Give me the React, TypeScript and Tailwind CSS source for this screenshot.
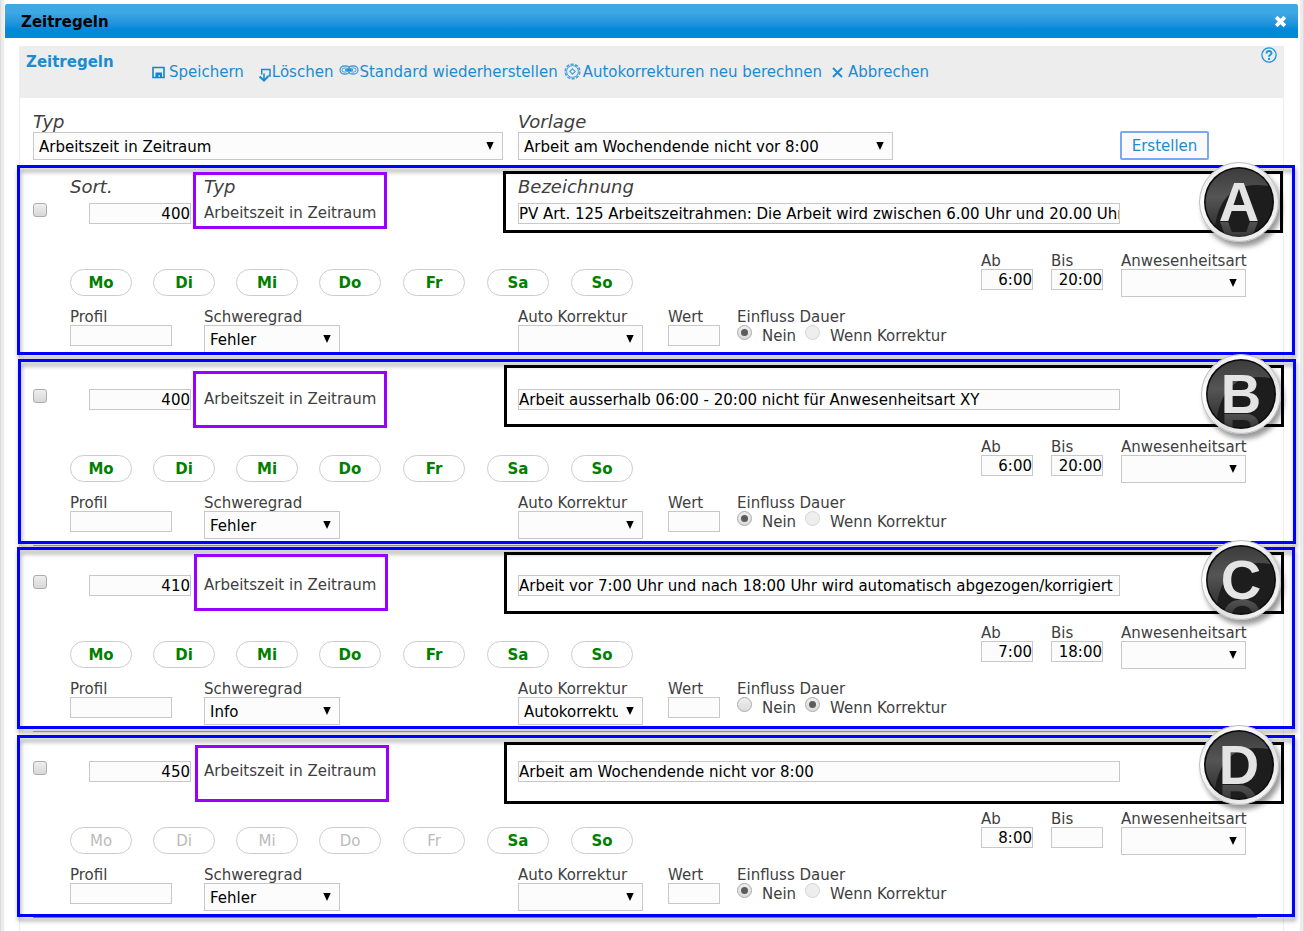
import React, { useState } from 'react'
import clsx from 'clsx'

interface Rule {
  id: string;
  sort: string;
  name: string;
  days: string[];
  from: string;
  to: string;
  severity: string;
  correction: string;
  influence: "nein" | "korrektur";
  // placement of the marker frames over the rule
  frame: string;
  typeFrame: string;
  nameFrame: string;
  badge: string;
}

const WORKDAYS = ["Mo", "Di", "Mi", "Do"];
const WEEKEND = ["Fr", "Sa", "So"];
const ALL_DAYS = [...WORKDAYS, ...WEEKEND];

const RULES: Rule[] = [
  {
    id: "A",
    sort: "400",
    name: "PV Art. 125 Arbeitszeitrahmen: Die Arbeit wird zwischen 6.00 Uhr und 20.00 Uhr geleistet",
    days: ALL_DAYS,
    from: "6:00",
    to: "20:00",
    severity: "Fehler",
    correction: "",
    influence: "nein",
    frame: "-left-[3px] -right-3 -top-[2px] h-[190px]",
    typeFrame: "left-[173px] top-[5px]",
    nameFrame: "left-[483px] right-0 top-[4px]",
    badge: "right-1 -top-[5px]",
  },
  {
    id: "B",
    sort: "400",
    name: "Arbeit ausserhalb 06:00 - 20:00 nicht für Anwesenheitsart XY",
    days: ALL_DAYS,
    from: "6:00",
    to: "20:00",
    severity: "Fehler",
    correction: "",
    influence: "nein",
    frame: "-left-[2px] -right-[13px] top-0 h-[185px]",
    typeFrame: "left-[173px] top-[12px]",
    nameFrame: "left-[484px] -right-px top-[6px]",
    badge: "right-[2px] -top-[5px]",
  },
  {
    id: "C",
    sort: "410",
    name: "Arbeit vor 7:00 Uhr und nach 18:00 Uhr wird automatisch abgezogen/korrigiert",
    days: ALL_DAYS,
    from: "7:00",
    to: "18:00",
    severity: "Info",
    correction: "Autokorrektur",
    influence: "korrektur",
    frame: "-left-[3px] -right-3 top-[2px] h-[182px]",
    typeFrame: "left-[174px] top-[9px]",
    nameFrame: "left-[484px] -right-px top-[7px]",
    badge: "right-[2px] -top-[5px]",
  },
  {
    id: "D",
    sort: "450",
    name: "Arbeit am Wochendende nicht vor 8:00",
    days: ["Sa", "So"],
    from: "8:00",
    to: "",
    severity: "Fehler",
    correction: "",
    influence: "nein",
    frame: "-left-[3px] -right-3 top-[4px] h-[182px]",
    typeFrame: "left-[175px] top-[14px]",
    nameFrame: "left-[484px] -right-px top-[11px]",
    badge: "right-1 -top-[6px]",
  },
];


interface SelectProps {
  id: string;
  value: string;
  options: string[];
  className: string;
}

const Select: React.FC<SelectProps> = ({ id, value, options, className }) => (
  <div className={clsx("relative h-7", className)}>
    <select
      id={id}
      defaultValue={value}
      className="block h-full w-full appearance-none border border-[#c8c8c8] bg-[#fcfcfc] pl-[5px] pr-6 pt-[2px] text-black outline-none"
    >
      {options.map((option) => <option key={option} value={option}>{option}</option>)}
    </select>
    <svg className="pointer-events-none absolute right-[9px] top-[10px] h-2 w-2" viewBox="0 0 8 8">
      <path d="M0.3 0h7.4L4 8z" fill="#000" />
    </svg>
  </div>
);


interface TextInputProps {
  id: string;
  value: string;
  className: string;
}

const TextInput: React.FC<TextInputProps> = ({ id, value, className }) => (
  <input
    id={id}
    type="text"
    defaultValue={value}
    className={clsx("block h-[21px] border border-[#c8c8c8] bg-[#fcfcfc] pt-[2px] text-black outline-none", className)}
  />
);


const Field: React.FC<{ id: string; label: string; className?: string; children: React.ReactNode }> = ({ id, label, className, children }) => (
  <div className={className}>
    <label htmlFor={id} className="block h-[18px] whitespace-nowrap leading-5">{label}</label>
    {children}
  </div>
);


const DayButton: React.FC<{ day: string; active: boolean; onToggle: () => void }> = ({ day, active, onToggle }) => (
  <button
    type="button"
    aria-pressed={active}
    onClick={onToggle}
    className={clsx(
      "h-[27px] w-[62px] rounded-full border border-[#cccccc] bg-white pt-[2px]",
      active ? "font-bold text-[#007f00]" : "text-[#bbbbbb]"
    )}
  >
    {day}
  </button>
);


const Radio: React.FC<{ id: string; name: string; checked: boolean; disabled: boolean; onChange: () => void }> = ({ id, name, checked, disabled, onChange }) => (
  <span className="relative block h-[15px] w-[15px]">
    <input
      id={id}
      type="radio"
      name={name}
      checked={checked}
      disabled={disabled}
      onChange={onChange}
      className="block h-[15px] w-[15px] appearance-none rounded-full border border-[#aaaaaa] bg-linear-to-b from-[#eeeeee] to-[#dcdcdc] disabled:border-[#d4d4d4] disabled:to-[#eeeeee]"
    />
    {checked && <span className="pointer-events-none absolute left-1 top-1 h-[7px] w-[7px] rounded-full bg-[#5c5c5c]" />}
  </span>
);


// round glossy marker with the letter of the rule
const Badge: React.FC<{ letter: string; className: string }> = ({ letter, className }) => (
  <div className={clsx("pointer-events-none absolute h-20 w-20 rounded-full shadow-[3px_5px_5px_rgba(0,0,0,0.4)]", className)}>
    <svg className="absolute inset-0 h-20 w-20" viewBox="0 0 80 80">
      <defs>
        <linearGradient id={`ring${letter}`} x1="0" y1="0" x2="1" y2="1">
          <stop offset="0" stopColor="#c9c9c9" />
          <stop offset="0.25" stopColor="#ffffff" />
          <stop offset="0.6" stopColor="#e2e2e2" />
          <stop offset="1" stopColor="#ffffff" />
        </linearGradient>
        <linearGradient id={`gloss${letter}`} x1="0" y1="0" x2="0" y2="1">
          <stop offset="0" stopColor="#3c3c3c" />
          <stop offset="0.5" stopColor="#555555" />
          <stop offset="1" stopColor="#333333" />
        </linearGradient>
      </defs>
      <circle cx="40" cy="40" r="39.5" fill={`url(#ring${letter})`} stroke="#bdbdbd" strokeWidth="1" />
      <circle cx="40" cy="40" r="35" fill="#0c0c0c" />
      <circle cx="40" cy="40" r="33.5" fill="#1d1d1d" />
      <path d="M16 63.4A33.5 33.5 0 1 1 69.5 24Q49 21 36 28Q20 38 16 63.4z" fill={`url(#gloss${letter})`} />
    </svg>
    <div className="absolute inset-[5px] flex justify-center overflow-hidden rounded-full pt-[7px]">
      <span className="block h-14 text-[56px] font-bold leading-[56px] text-[#e4e4e4] [font-family:'Liberation_Sans',Arial,sans-serif] [-webkit-box-reflect:below_-17px_linear-gradient(transparent_30%,rgba(0,0,0,0.35))]">
        {letter}
      </span>
    </div>
  </div>
);


const RuleRow: React.FC<{ rule: Rule; first: boolean }> = ({ rule, first }) => {
  const [days, setDays] = useState<string[]>(rule.days);
  const [influence, setInfluence] = useState(rule.influence);

  const toggleDay = (day: string) => {
    setDays(days.includes(day) ? days.filter((d) => d !== day) : [...days, day]);
  };

  const key = rule.id.toLowerCase();
  // without a correction there is nothing the duration could depend on
  const noCorrection = rule.correction === "";

  return (
    <section className="relative pb-[6px]">
      <div className="ml-[13px] mr-[26px] border-t border-[#8f8f8f]" />

      {first ? (
        <div className="grid h-[35px] grid-cols-[134px_314px_1fr] pl-[50px] pt-[7px] text-lg italic leading-6">
          <span>Sort.</span>
          <span>Typ</span>
          <span>Bezeichnung</span>
        </div>
      ) : (
        <div className="h-[29px]" />
      )}

      <div className="grid grid-cols-[37px_134px_314px_1fr] pl-[13px] pr-[163px]">
        <input
          type="checkbox"
          aria-label="Regel auswählen"
          className="h-[14px] w-[14px] appearance-none rounded-[3px] border border-[#acacac] bg-linear-to-b from-[#eeeeee] to-[#d8d8d8] checked:bg-[#5c5c5c]"
        />
        <input
          type="text"
          aria-label="Sort."
          defaultValue={rule.sort}
          className="ml-[19px] block h-[21px] w-[102px] border border-[#c8c8c8] bg-[#fcfcfc] pt-[2px] text-right text-black outline-none"
        />
        <span className="whitespace-nowrap leading-5">Arbeitszeit in Zeitraum</span>
        <input
          type="text"
          aria-label="Bezeichnung"
          defaultValue={rule.name}
          className="block h-[21px] w-full min-w-0 border border-[#c8c8c8] bg-[#fcfcfc] pt-[2px] text-black outline-none"
        />
      </div>

      <div className="mt-[27px] flex h-[46px] justify-between pl-[50px] pr-[37px]">
        <div className="flex gap-[22px] pt-[18px]">
          <div className="flex gap-[21px]">
            {WORKDAYS.map((day) => <DayButton key={day} day={day} active={days.includes(day)} onToggle={() => toggleDay(day)} />)}
          </div>
          <div className="flex gap-[22px]">
            {WEEKEND.map((day) => <DayButton key={day} day={day} active={days.includes(day)} onToggle={() => toggleDay(day)} />)}
          </div>
        </div>
        <div className="flex gap-[18px]">
          <Field id={`${key}-ab`} label="Ab">
            <TextInput id={`${key}-ab`} value={rule.from} className="w-[52px] text-right" />
          </Field>
          <Field id={`${key}-bis`} label="Bis">
            <TextInput id={`${key}-bis`} value={rule.to} className="w-[52px] text-right" />
          </Field>
          <Field id={`${key}-art`} label="Anwesenheitsart" className="w-[125px]">
            <Select id={`${key}-art`} value="" options={[""]} className="w-[125px]" />
          </Field>
        </div>
      </div>

      <div className="mt-[10px] grid grid-cols-[134px_314px_150px_69px_1fr] pl-[50px]">
        <Field id={`${key}-profil`} label="Profil">
          <TextInput id={`${key}-profil`} value="" className="w-[102px]" />
        </Field>
        <Field id={`${key}-grad`} label="Schweregrad">
          <Select id={`${key}-grad`} value={rule.severity} options={["Fehler", "Info"]} className="w-[136px]" />
        </Field>
        <Field id={`${key}-auto`} label="Auto Korrektur">
          <Select id={`${key}-auto`} value={rule.correction} options={["", "Autokorrektur"]} className="w-[125px]" />
        </Field>
        <Field id={`${key}-wert`} label="Wert">
          <TextInput id={`${key}-wert`} value="" className="w-[52px]" />
        </Field>
        <fieldset>
          <legend className="h-[18px] leading-5">Einfluss Dauer</legend>
          <div className="flex">
            <Radio id={`${key}-nein`} name={`${key}-einfluss`} checked={influence === "nein"} disabled={false} onChange={() => setInfluence("nein")} />
            <label htmlFor={`${key}-nein`} className="w-[53px] pl-[10px] leading-[22px]">Nein</label>
            <Radio id={`${key}-korr`} name={`${key}-einfluss`} checked={influence === "korrektur"} disabled={noCorrection} onChange={() => setInfluence("korrektur")} />
            <label htmlFor={`${key}-korr`} className="whitespace-nowrap pl-[10px] leading-[22px]">Wenn Korrektur</label>
          </div>
        </fieldset>
      </div>

      {/* marker frames */}
      <div className={clsx("pointer-events-none absolute border-[3px] border-[#0000ff] drop-shadow-[1px_4px_2px_rgba(0,0,0,0.35)]", rule.frame)} />
      <div className={clsx("pointer-events-none absolute h-[57px] w-[194px] border-[3px] border-[#9900ff]", rule.typeFrame)} />
      <div className={clsx("pointer-events-none absolute h-[62px] border-[3px] border-black", rule.nameFrame)} />
      <Badge letter={rule.id} className={rule.badge} />
    </section>
  );
};


const Toolbar: React.FC = () => (
  <nav className="flex items-center whitespace-nowrap text-[#1a8cd2]">
    <button type="button" className="flex items-center gap-1">
      <svg className="h-[13px] w-[13px]" viewBox="0 0 13 13">
        <path d="M1 1.5h11v10H1z" fill="none" stroke="#0f86d0" strokeWidth="1.6" />
        <path d="M3.5 6.5h6.5v4.500h-2v-1.800h-1.500v1.800h-3z" fill="#0f86d0" />
      </svg>
      Speichern
    </button>
    <button type="button" className="ml-[14px] flex items-center">
      <svg className="mt-[6px] h-[14px] w-[14px]" viewBox="0 0 14 14" fill="none" stroke="#1a8cd2">
        <path d="M3.700 6.500V1.500h8.300v6.500H9.500" strokeWidth="1.5" />
        <path d="M6 5.500v7" strokeWidth="1.6" />
        <path d="M1.500 8.500L6 12.600l4-4.100" strokeWidth="2" />
      </svg>
      Löschen
    </button>
    <button type="button" className="ml-[6px] flex items-center">
      <svg className="mb-[5px] h-[10px] w-5" viewBox="0 0 20 10" fill="none" stroke="#1a8cd2">
        <rect x="1" y="1" width="10" height="8" rx="4" strokeWidth="1.3" opacity="0.8" />
        <rect x="9" y="1" width="10" height="8" rx="4" strokeWidth="1.3" opacity="0.8" />
        <rect x="3" y="3" width="6" height="4" rx="2" strokeWidth="1" opacity="0.8" />
        <rect x="11" y="3" width="6" height="4" rx="2" strokeWidth="1" opacity="0.8" />
        <path d="M6 5h8" strokeWidth="1.6" />
      </svg>
      Standard wiederherstellen
    </button>
    <button type="button" className="ml-[6px] flex items-center gap-[2px]">
      <svg className="mb-[2px] h-[17px] w-[17px]" viewBox="0 0 17 17" fill="none" stroke="#1a8cd2">
        <circle cx="8.5" cy="8.5" r="7.3" strokeWidth="1.6" strokeDasharray="3.2 1.39" opacity="0.8" />
        <circle cx="8.5" cy="8.5" r="5.9" strokeWidth="1" opacity="0.8" />
        <path d="M8.5 5.800l2.700 2.700-2.700 2.700-2.700-2.700z" strokeWidth="1.1" opacity="0.8" />
      </svg>
      Autokorrekturen neu berechnen
    </button>
    <button type="button" className="ml-[10px] flex items-center gap-[5px]">
      <svg className="h-[11px] w-[11px]" viewBox="0 0 11 11">
        <path d="M1 1l9 9M10 1l-9 9" stroke="#1a8cd2" strokeWidth="1.9" />
      </svg>
      Abbrechen
    </button>
  </nav>
);


export default function App() {
  return (
    <div className="min-h-screen border-x border-[#dcdcdc] bg-[#ececec] px-[3px] text-[15px] text-[#404040] [font-family:Verdana,'DejaVu_Sans',sans-serif]">
      <div className="min-h-screen bg-white pl-px pr-[2px] pt-1">
        <header className="flex h-[34px] items-center justify-between rounded-t-xs bg-linear-to-b from-[#3ea8e3] from-25% to-[#0088d9] to-75% pl-4 pr-[11px]">
          <h1 className="pt-[2px] font-bold text-black">Zeitregeln</h1>
          <button type="button" aria-label="Schliessen">
            <svg className="h-[13px] w-[13px]" viewBox="0 0 12 12">
              <path d="M2 2l8 8M10 2l-8 8" stroke="#fff" strokeWidth="3.4" />
            </svg>
          </button>
        </header>

        <main className="mx-[14px] mt-2 min-h-[885px] border-x border-[#eeeeee]">
          <div className="flex h-[52px] items-start bg-[#ededed] px-[6px]">
            <h2 className="w-[126px] pt-[5px] font-bold text-[#1a8cd2]">Zeitregeln</h2>
            <div className="pt-[15px]">
              <Toolbar />
            </div>
            <button type="button" aria-label="Hilfe" className="ml-auto mt-px">
              <svg className="h-4 w-4" viewBox="0 0 16 16" fill="none" stroke="#1a94dc">
                <circle cx="8" cy="8" r="7.1" strokeWidth="1.3" />
                <path d="M5.6 6.4C5.6 3.3 10.6 3.3 10.5 6.2C10.4 7.7 8.1 7.7 8 9.8" strokeWidth="1.9" />
                <path d="M8 11v1.9" strokeWidth="2" />
              </svg>
            </button>
          </div>

          <form onSubmit={(e) => e.preventDefault()}>
            <div className="flex items-end gap-[15px] pb-[7px] pl-[13px] pr-[74px] pt-3">
              <div>
                <label htmlFor="typ" className="block h-[22px] text-lg italic leading-6">Typ</label>
                <Select id="typ" value="Arbeitszeit in Zeitraum" options={["Arbeitszeit in Zeitraum"]} className="w-[470px]" />
              </div>
              <div>
                <label htmlFor="vorlage" className="block h-[22px] text-lg italic leading-6">Vorlage</label>
                <Select id="vorlage" value="Arbeit am Wochendende nicht vor 8:00" options={["Arbeit am Wochendende nicht vor 8:00"]} className="w-[375px]" />
              </div>
              <button type="submit" className="ml-auto h-[29px] w-[89px] rounded-xs border-2 border-[#78a8f0] bg-[#fafafa] pt-px text-[#1a8cd2]">
                Erstellen
              </button>
            </div>

            {RULES.map((rule, index) => <RuleRow key={rule.id} rule={rule} first={index === 0} />)}
          </form>
          <div className="ml-[13px] mr-[26px] border-t border-[#8f8f8f]" />
        </main>
      </div>
    </div>
  )
}
